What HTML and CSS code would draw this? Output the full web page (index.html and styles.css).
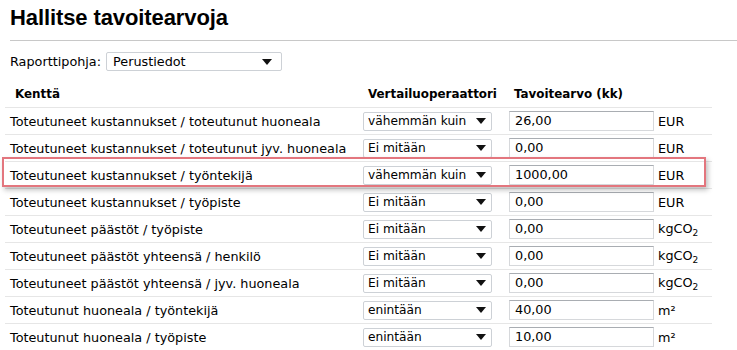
FILE: index.html
```html
<!DOCTYPE html>
<html lang="fi">
<head>
<meta charset="utf-8">
<title>Hallitse tavoitearvoja</title>
<link rel="stylesheet" href="styles.css">
</head>
<body>
<div class="page">
  <h1 class="title">Hallitse tavoitearvoja</h1>
  <div class="rule"></div>
  <div class="report">
    <span class="report-label">Raporttipohja:</span>
    <div class="select select-report"><span>Perustiedot</span><i class="arrow"></i></div>
  </div>
  <div class="table-wrap">
    <table class="targets">
      <colgroup>
        <col class="w-field">
        <col class="w-op">
        <col class="w-val">
        <col class="w-unit">
      </colgroup>
      <thead>
        <tr>
          <th class="c-field">Kenttä</th>
          <th class="c-op">Vertailuoperaattori</th>
          <th class="c-val">Tavoitearvo (kk)</th>
          <th class="c-unit"></th>
        </tr>
      </thead>
      <tbody>
        <tr>
          <td class="c-field">Toteutuneet kustannukset / toteutunut huoneala</td>
          <td class="c-op"><div class="select"><span>vähemmän kuin</span><i class="arrow"></i></div></td>
          <td class="c-val"><div class="input">26,00</div></td>
          <td class="c-unit">EUR</td>
        </tr>
        <tr>
          <td class="c-field">Toteutuneet kustannukset / toteutunut jyv. huoneala</td>
          <td class="c-op"><div class="select"><span>Ei mitään</span><i class="arrow"></i></div></td>
          <td class="c-val"><div class="input">0,00</div></td>
          <td class="c-unit">EUR</td>
        </tr>
        <tr class="highlighted">
          <td class="c-field">Toteutuneet kustannukset / työntekijä</td>
          <td class="c-op"><div class="select"><span>vähemmän kuin</span><i class="arrow"></i></div></td>
          <td class="c-val"><div class="input">1000,00</div></td>
          <td class="c-unit">EUR</td>
        </tr>
        <tr>
          <td class="c-field">Toteutuneet kustannukset / työpiste</td>
          <td class="c-op"><div class="select"><span>Ei mitään</span><i class="arrow"></i></div></td>
          <td class="c-val"><div class="input">0,00</div></td>
          <td class="c-unit">EUR</td>
        </tr>
        <tr>
          <td class="c-field">Toteutuneet päästöt / työpiste</td>
          <td class="c-op"><div class="select"><span>Ei mitään</span><i class="arrow"></i></div></td>
          <td class="c-val"><div class="input">0,00</div></td>
          <td class="c-unit">kgCO<sub>2</sub></td>
        </tr>
        <tr>
          <td class="c-field">Toteutuneet päästöt yhteensä / henkilö</td>
          <td class="c-op"><div class="select"><span>Ei mitään</span><i class="arrow"></i></div></td>
          <td class="c-val"><div class="input">0,00</div></td>
          <td class="c-unit">kgCO<sub>2</sub></td>
        </tr>
        <tr>
          <td class="c-field">Toteutuneet päästöt yhteensä / jyv. huoneala</td>
          <td class="c-op"><div class="select"><span>Ei mitään</span><i class="arrow"></i></div></td>
          <td class="c-val"><div class="input">0,00</div></td>
          <td class="c-unit">kgCO<sub>2</sub></td>
        </tr>
        <tr>
          <td class="c-field">Toteutunut huoneala / työntekijä</td>
          <td class="c-op"><div class="select"><span>enintään</span><i class="arrow"></i></div></td>
          <td class="c-val"><div class="input">40,00</div></td>
          <td class="c-unit">m²</td>
        </tr>
        <tr>
          <td class="c-field">Toteutunut huoneala / työpiste</td>
          <td class="c-op"><div class="select"><span>enintään</span><i class="arrow"></i></div></td>
          <td class="c-val"><div class="input">10,00</div></td>
          <td class="c-unit">m²</td>
        </tr>
      </tbody>
    </table>
    <div class="highlight-box"></div>
  </div>
</div>
</body>
</html>
```

FILE: styles.css
```css
html, body {
  margin: 0;
  padding: 0;
  background: #fff;
}
body {
  font-family: "DejaVu Sans", Verdana, sans-serif;
  font-size: 12.8px;
  color: #000;
}
.page {
  overflow: hidden;
  height: 350px;
}
.title {
  margin: 0;
  padding: 4px 0 0 10px;
  height: 32px;
  font-family: "Liberation Sans", Arial, sans-serif;
  font-size: 22px;
  font-weight: bold;
  line-height: 28px;
  letter-spacing: -0.1px;
}
.rule {
  margin: 4px 0 0 10px;
  height: 1px;
  background: #c8c8c8;
}
.report {
  display: flex;
  align-items: center;
  gap: 5px;
  padding: 11px 0 0 10px;
  height: 19px;
}
.select {
  display: flex;
  align-items: center;
  justify-content: space-between;
  box-sizing: border-box;
  height: 19px;
  border: 1px solid #cdd1d6;
  border-radius: 2px;
  padding: 0 5px 0 4px;
  background: #fff;
  white-space: nowrap;
  font-size: 12.2px;
}
.select-report {
  width: 176px;
  padding-left: 6px;
  padding-right: 9px;
  font-size: 12.8px;
}
.arrow {
  flex: none;
  width: 0;
  height: 0;
  border-left: 5px solid transparent;
  border-right: 5px solid transparent;
  border-top: 6px solid #111;
}
.table-wrap {
  position: relative;
  margin: 10px 0 0 5px;
}
.targets {
  border-collapse: collapse;
  table-layout: fixed;
  width: 707px;
}
.w-field { width: 358px; }
.w-op { width: 146px; }
.w-val { width: 149px; }
.w-unit { width: 54px; }
.targets th {
  font-size: 11.9px;
  font-weight: bold;
  text-align: left;
  height: 26px;
  padding: 0 0 0 5px;
  border-bottom: 1px solid #e6e6e6;
  vertical-align: middle;
  white-space: nowrap;
}
.targets th.c-field {
  padding-left: 10px;
}
.targets td {
  height: 26px;
  padding: 0;
  border-bottom: 1px solid #e6e6e6;
  vertical-align: middle;
  white-space: nowrap;
}
.targets td.c-field {
  padding-left: 5px;
}
.c-op .select {
  width: 129px;
}
.input {
  box-sizing: border-box;
  width: 145px;
  height: 20px;
  border: 1px solid #d6d8db;
  border-top-color: #a9adb2;
  padding: 0 5px;
  line-height: 18px;
}
.targets td.c-unit {
  padding-left: 0;
}
.c-unit sub {
  font-size: 9px;
  vertical-align: -3px;
}
.highlight-box {
  position: absolute;
  left: -3px;
  top: 76px;
  width: 700px;
  height: 26px;
  border: 2px solid #e3767e;
  box-shadow: 2px 3px 5px rgba(0, 0, 0, 0.25);
  pointer-events: none;
}
```
